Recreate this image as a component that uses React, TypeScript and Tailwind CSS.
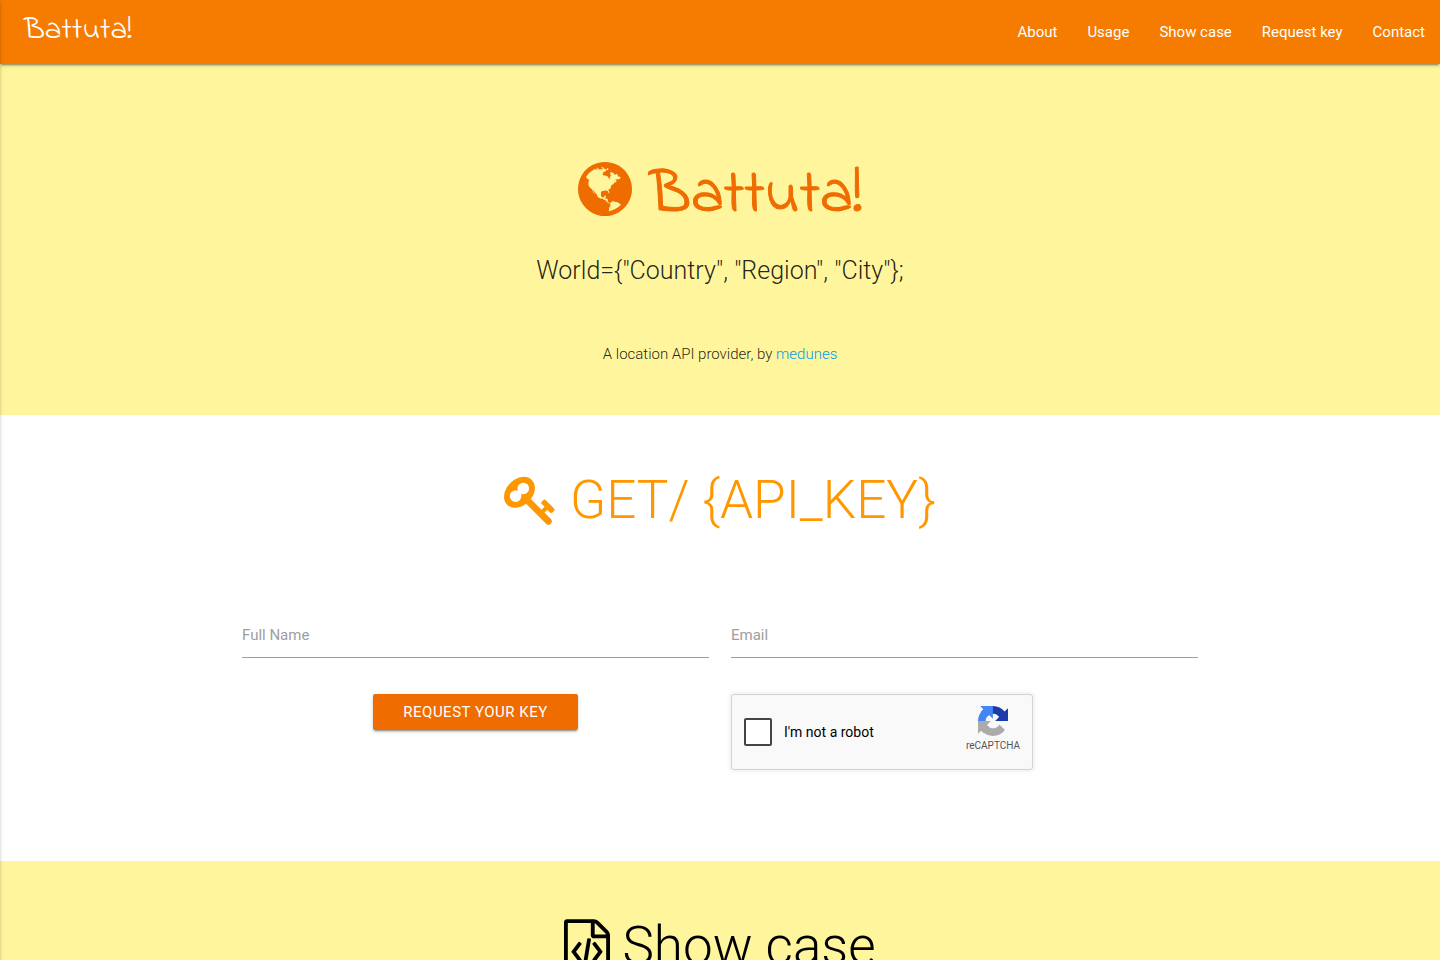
import { useState } from "react";
import type { ReactNode } from "react";

const NAV_LINKS = [
  { label: "About", href: "#about" },
  { label: "Usage", href: "#usage" },
  { label: "Show case", href: "#showcase" },
  { label: "Request key", href: "#request" },
  { label: "Contact", href: "#contact" },
];

const GLOBE =
  "M896 128q209 0 385.5 103t279.5 279.5 103 385.5-103 385.5-279.5 279.5-385.5 103-385.5-103-279.5-279.5-103-385.5 103-385.5 279.5-279.5 385.5-103zm274 521q-2 1-9.5 9.5t-13.5 9.5q2 0 4.5-5t5-11 3.5-7q6-7 22-15 14-6 52-12 34-8 51 11-2-2 9.5-13t14.5-12q3-2 15-4.5t15-7.5l2-22q-12 1-17.5-7t-6.5-21q0 2-6 8 0-7-4.5-8t-11.5 1-9 1q-10-3-15-7.5t-8-16.5-4-15q-2-5-9.5-11t-9.5-10q-1-2-2.5-5.5t-3-6.5-4-5.5-5.5-2.5-7 5-7.5 10-4.5 5q-3-2-6-1.5t-4.5 1-4.5 3-5 3.5q-3 2-8.5 3t-8.5 2q15-5-1-11-10-4-16-3 9-4 7.5-12t-8.5-14h5q-1-4-8.5-8.5t-17.5-8.5-13-6q-8-5-34-9.5t-33-.5q-5 6-4.5 10.5t4 14 3.5 12.5q1 6-5.5 13t-6.5 12q0 7 14 15.5t10 21.5q-3 8-16 16t-16 12q-5 8-1.5 18.5t10.5 16.5q2 2 1.5 4t-3.5 4.5-5.5 4-6.5 3.5l-3 2q-11 5-20.5-6t-13.5-26q-7-25-16-30-23-8-29 1-5-13-41-26-25-9-58-4 6-1 0-15-7-15-19-12 3-6 4-17.5t1-13.5q3-13 12-23 1-1 7-8.5t9.5-13.5.5-6q35 4 50-11 5-5 11.5-17t10.5-17q9-6 14-5.5t14.5 5.5 14.5 5q14 1 15.5-11t-7.5-20q12 1 3-17-4-7-8-9-12-4-27 5-8 4 2 8-1-1-9.5 10.5t-16.5 17.5-16-5q-1-1-5.5-13.5t-9.5-13.5q-8 0-16 15 3-8-11-15t-24-8q19-12-8-27-7-4-20.5-5t-19.5 4q-5 7-5.5 11.5t5 8 10.5 5.5 11.5 4 8.5 3q14 10 8 14-2 1-8.5 3.5t-11.5 4.5-6 4q-3 4 0 14t-2 14q-5-5-9-17.5t-7-16.5q7 9-25 6l-10-1q-4 0-16 2t-20.5 1-13.5-8q-4-8 0-20 1-4 4-2-4-3-11-9.5t-10-8.5q-46 15-94 41 6 1 12-1 5-2 13-6.5t10-5.5q34-14 42-7l5-5q14 16 20 25-7-4-30-1-20 6-22 12 7 12 5 18-4-3-11.5-10t-14.5-11-15-5q-16 0-22 1-146 80-235 222 7 7 12 8 4 1 5 9t2.5 11 11.5-3q9 8 3 19 1-1 44 27 19 17 21 21 3 11-10 18-1-2-9-9t-9-4q-3 5 .5 18.5t10.5 12.5q-7 0-9.5 16t-2.5 35.5-1 23.5l2 1q-3 12 5.5 34.5t21.5 19.5q-13 3 20 43 6 8 8 9 3 2 12 7.5t15 10 10 10.5q4 5 10 22.5t14 23.5q-2 6 9.5 20t10.5 23q-1 0-2.5 1t-2.5 1q3 7 15.5 14t15.5 13q1 3 2 10t3 11 8 2q2-20-24-62-15-25-17-29-3-5-5.5-15.5t-4.5-14.5q2 0 6 1.5t8.5 3.5 7.5 4 2 3q-3 7 2 17.5t12 18.5 17 19 12 13q6 6 14 19.5t0 13.5q9 0 20 10t17 20q5 8 8 26t5 24q2 7 8.5 13.5t12.5 9.5l16 8 13 7q5 2 18.5 10.5t21.5 11.5q10 4 16 4t14.5-2.5 13.5-3.5q15-2 29 15t21 21q36 19 55 11-2 1 .5 7.5t8 15.5 9 14.5 5.5 8.5q5 6 18 15t18 15q6-4 7-9-3 8 7 20t18 10q14-3 14-32-31 15-49-18 0-1-2.5-5.5t-4-8.5-2.5-8.5 0-7.5 5-3q9 0 10-3.5t-2-12.5-4-13q-1-8-11-20t-12-15q-5 9-16 8t-16-9q0 1-1.5 5.5t-1.5 6.5q-13 0-15-1 1-3 2.5-17.5t3.5-22.5q1-4 5.5-12t7.5-14.5 4-12.5-4.5-9.5-17.5-2.5q-19 1-26 20-1 3-3 10.5t-5 11.5-9 7q-7 3-24 2t-24-5q-13-8-22.5-29t-9.5-37q0-10 2.5-26.5t3-25-5.5-24.5q3-2 9-9.5t10-10.5q2-1 4.5-1.5t4.5 0 4-1.5 3-6q-1-1-4-3-3-3-4-3 7 3 28.5-1.5t27.5 1.5q15 11 22-2 0-1-2.5-9.5t-.5-13.5q5 27 29 9 3 3 15.5 5t17.5 5q3 2 7 5.5t5.5 4.5 5-.5 8.5-6.5q10 14 12 24 11 40 19 44 7 3 11 2t4.5-9.5 0-14-1.5-12.5l-1-8v-18l-1-8q-15-3-18.5-12t1.5-18.5 15-18.5q1-1 8-3.5t15.5-6.5 12.5-8q21-19 15-35 7 0 11-9-1 0-5-3t-7.5-5-4.5-2q9-5 2-16 5-3 7.5-11t7.5-10q9 12 21 2 7-8 1-16 5-7 20.5-10.5t18.5-9.5q7 2 8-2t1-12 3-12q4-5 15-9t13-5l17-11q3-4 0-4 18 2 31-11 10-11-6-20 3-6-3-9.5t-15-5.5q3-1 11.5-.5t10.5-1.5q15-10-7-16-17-5-43 12zm-163 877q206-36 351-189-3-3-12.5-4.5t-12.5-3.5q-18-7-24-8 1-7-2.5-13t-8-9-12.5-8-11-7q-2-2-7-6t-7-5.5-7.5-4.5-8.5-2-10 1l-3 1q-3 1-5.5 2.5t-5.5 3-4 3 0 2.5q-21-17-36-22-5-1-11-5.5t-10.5-7-10-1.5-11.5 7q-5 5-6 15t-2 13q-7-5 0-17.5t2-18.5q-3-6-10.5-4.5t-12 4.5-11.5 8.5-9 6.5-8.5 5.5-8.5 7.5q-3 4-6 12t-5 11q-2-4-11.5-6.5t-9.5-5.5q2 10 4 35t5 38q7 31-12 48-27 25-29 40-4 22 12 26 0 7-8 20.5t-7 21.5q0 6 2 16z";

const KEY =
  "M832 512q0-80-56-136t-136-56-136 56-56 136q0 42 19 83-41-19-83-19-80 0-136 56t-56 136 56 136 136 56 136-56 56-136q0-42-19-83 41 19 83 19 80 0 136-56t56-136zm851 704q0 17-49 66t-66 49q-9 0-28.5-16t-36.5-33-38.5-40-24.5-26l-96 96 220 220q28 28 28 68 0 42-39 81t-81 39q-40 0-68-28l-671-671q-176 131-365 131-163 0-265.5-102.5t-102.5-265.5q0-160 95-313t248-248 313-95q163 0 265.5 102.5t102.5 265.5q0 189-131 365l355 355 96-96q-3-3-26-24.5t-40-38.5-33-36.5-16-28.5q0-17 49-66t66-49q13 0 23 10 6 6 46 44.5t82 79.5 86.5 86 73 78 28.5 41z";

const FILE_CODE =
  "M1596 380q28 28 48 76t20 88v1152q0 40-28 68t-68 28h-1344q-40 0-68-28t-28-68v-1600q0-40 28-68t68-28h896q40 0 88 20t76 48zm-444-244v376h376q-10-29-22-41l-313-313q-12-12-41-22zm384 1528v-1024h-416q-40 0-68-28t-28-68v-416h-768v1536h1280zm-928-896q8-11 21-12.5t24 6.5l51 38q11 8 12.5 21t-6.5 24l-182 243 182 243q8 11 6.5 24t-12.5 21l-51 38q-11 8-24 6.5t-21-12.5l-226-301q-14-19 0-38zm802 301q14 19 0 38l-226 301q-8 11-21 12.5t-24-6.5l-51-38q-11-8-12.5-21t6.5-24l182-243-182-243q-8-11-6.5-24t12.5-21l51-38q11-8 24-6.5t21 12.5zm-620 461q-13-2-20.5-13t-5.5-24l138-831q2-13 13-20.5t24-5.5l63 10q13 2 20.5 13t5.5 24l-138 831q-2 13-13 20.5t-24 5.5z";

function Icon({ path, viewBox, className }: { path: string; viewBox: string; className: string }) {
  return (
    <svg viewBox={viewBox} className={className} fill="currentColor" aria-hidden="true">
      <path d={path} />
    </svg>
  );
}

function RecaptchaLogo() {
  return (
    <svg viewBox="0 0 64 64" className="mb-0.5 size-[30px]" aria-hidden="true">
      <path
        fill="#1c3aa9"
        d="M64 31.955l-.033-1.37V4.687l-7.16 7.16C50.948 4.674 42.033.093 32.05.093c-10.4 0-19.622 4.96-25.458 12.64l11.736 11.86a15.55 15.55 0 0 1 4.754-5.334c2.05-1.6 4.952-2.906 8.968-2.906.485 0 .86.057 1.135.163 4.976.393 9.288 3.14 11.828 7.124l-8.307 8.307L64 31.953"
      />
      <path
        fill="#4285f4"
        d="M31.862.094l-1.37.033H4.594l7.16 7.16C4.58 13.147 0 22.06 0 32.046c0 10.4 4.96 19.622 12.64 25.458L24.5 45.768a15.55 15.55 0 0 1-5.334-4.754c-1.6-2.05-2.906-4.952-2.906-8.968 0-.485.057-.86.163-1.135.393-4.976 3.14-9.288 7.124-11.828l8.307 8.307L31.86.095"
      />
      <path
        fill="#ababab"
        d="M.001 32.045l.033 1.37v25.898l7.16-7.16c5.86 7.173 14.774 11.754 24.76 11.754 10.4 0 19.622-4.96 25.458-12.64l-11.736-11.86a15.55 15.55 0 0 1-4.754 5.334c-2.05 1.6-4.952 2.906-8.968 2.906-.485 0-.86-.057-1.135-.163-4.976-.393-9.288-3.14-11.828-7.124l8.307-8.307c-10.522.04-22.4.066-27.295-.005"
      />
    </svg>
  );
}

function SectionTitle({ children, className }: { children: ReactNode; className: string }) {
  return (
    <h2 className={`flex items-center justify-center gap-3 text-[53px] leading-[58px] font-light ${className}`}>
      {children}
    </h2>
  );
}

function Field({ id, label, type }: { id: string; label: string; type: string }) {
  const [value, setValue] = useState("");

  return (
    <div className="relative">
      <input
        id={id}
        type={type}
        value={value}
        onChange={(e) => setValue(e.target.value)}
        className="peer block h-[46px] w-full border-b border-[#9e9e9e] bg-transparent text-[15px] outline-none focus:border-[#ef6c00]"
      />
      <label
        htmlFor={id}
        className={`absolute left-0 text-[15px] leading-6 text-[#9e9e9e] peer-focus:-top-4 ${value ? "-top-4" : "top-[11px]"}`}
      >
        {label}
      </label>
    </div>
  );
}

export default function App() {
  return (
    <div className="relative min-h-screen overflow-x-hidden bg-white font-['Roboto',sans-serif] text-[15px] text-black/87">
      {/* closed side menu, only its shadow shows */}
      <div className="absolute inset-y-0 right-full z-20 w-60 shadow-[0_2px_2px_0_rgba(0,0,0,0.14),0_1px_5px_0_rgba(0,0,0,0.12),0_3px_1px_-2px_rgba(0,0,0,0.2)]" />

      <nav className="relative z-10 flex h-16 items-center justify-between bg-[#f57c00] pl-6 text-white shadow-[0_2px_2px_0_rgba(0,0,0,0.14),0_1px_5px_0_rgba(0,0,0,0.12),0_3px_1px_-2px_rgba(0,0,0,0.2)]">
        <a href="#" className="pb-0.5 font-['Indie_Flower','Lato',cursive] text-[31px] leading-[58px]">
          Battuta!
        </a>
        <ul className="flex">
          {NAV_LINKS.map((link) => (
            <li key={link.label}>
              <a href={link.href} className="block px-[15px] leading-[64px]">
                {link.label}
              </a>
            </li>
          ))}
        </ul>
      </nav>

      <header id="about" className="bg-[#fff59d] pt-[82px] pb-12 text-center font-light">
        <h1 className="flex items-center justify-center gap-[18px] font-['Indie_Flower','Lato',cursive] text-[61px] leading-[70px] font-normal text-[#ef6c00]">
          <Icon path={GLOBE} viewBox="128 128 1536 1536" className="size-[54px]" />
          <span className="pt-4 [-webkit-text-stroke:1px_currentColor]">Battuta!</span>
        </h1>
        <h5 className="mt-[23px] text-[25px] leading-8">World=&#123;"Country", "Region", "City"&#125;;</h5>
        <p className="mt-[54px] leading-[26px]">
          A location API provider, by{" "}
          <a href="#medunes" className="text-[#039be5]">
            medunes
          </a>
        </p>
      </header>

      <section id="request" className="pt-14 pb-[91px]">
        <SectionTitle className="text-[#ff9800]">
          <Icon path={KEY} viewBox="0 0 1792 1792" className="size-[54px]" />
          GET/ &#123;API_KEY&#125;
        </SectionTitle>
        <form
          className="mx-auto mt-[83px] grid w-[70%] grid-cols-2 gap-x-[22px] gap-y-9 px-[26px]"
          onSubmit={(e) => e.preventDefault()}
        >
          <Field id="name" label="Full Name" type="text" />
          <Field id="email" label="Email" type="email" />
          <div className="text-center">
            <button
              type="submit"
              className="h-9 rounded-xs bg-[#ef6c00] px-[30px] text-[15px] leading-9 tracking-[0.5px] text-white uppercase shadow-[0_2px_2px_0_rgba(0,0,0,0.14),0_1px_5px_0_rgba(0,0,0,0.12),0_3px_1px_-2px_rgba(0,0,0,0.2)]"
            >
              Request your key
            </button>
          </div>
          <div className="flex h-[76px] w-[302px] items-center justify-between rounded-[3px] border border-[#d3d3d3] bg-[#f9f9f9] px-3 shadow-[0_0_4px_1px_rgba(0,0,0,0.08)]">
            <label htmlFor="robot" className="flex items-center gap-3 text-sm text-black">
              <input
                id="robot"
                type="checkbox"
                className="size-7 appearance-none rounded-xs border-2 border-[#444] bg-white checked:bg-[#4285f4]"
              />
              I'm not a robot
            </label>
            <div className="flex flex-col items-center pb-1 text-[10px] leading-4 text-[#555]">
              <RecaptchaLogo />
              reCAPTCHA
            </div>
          </div>
        </form>
      </section>

      <section id="showcase" className="bg-[#fff59d] pt-14 pb-16">
        <SectionTitle className="text-black">
          <Icon path={FILE_CODE} viewBox="128 0 1536 1792" className="h-[54px] w-[46px]" />
          Show case
        </SectionTitle>
      </section>
    </div>
  );
}
